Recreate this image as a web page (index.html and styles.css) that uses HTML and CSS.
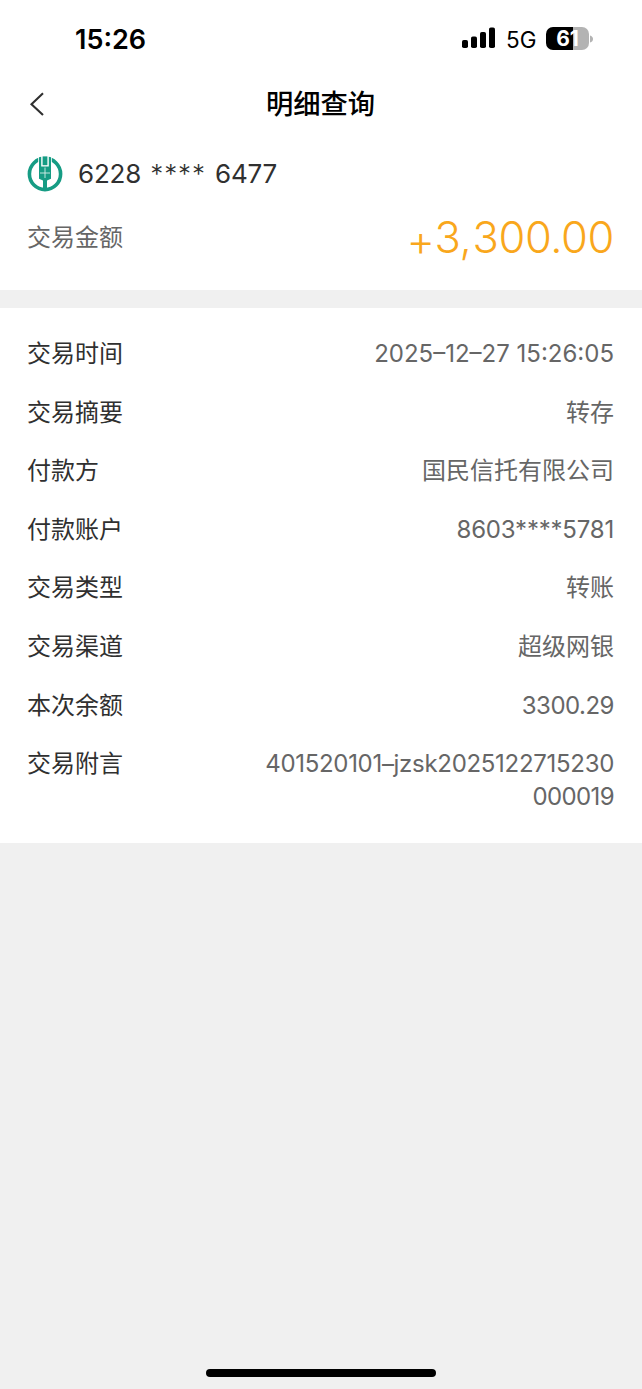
FILE: index.html
```html
<!DOCTYPE html>
<html lang="zh-CN">
<head>
<meta charset="utf-8">
<title>明细查询</title>
<link rel="stylesheet" href="styles.css">
</head>
<body>
<div class="screen">
  <div class="status">
    <span class="time">15:26</span>
    <div class="indicators">
      <svg class="signal" width="33" height="22" viewBox="0 0 33 22">
        <rect x="0" y="13" width="6" height="8" rx="1.8"/>
        <rect x="9" y="9.5" width="6" height="11.5" rx="1.8"/>
        <rect x="18" y="5" width="6" height="16" rx="1.8"/>
        <rect x="27" y="0.5" width="6" height="20.5" rx="1.8"/>
      </svg>
      <span class="network">5G</span>
      <div class="battery"><span class="level">61</span><svg class="cap" width="3" height="8" viewBox="0 0 3 8"><path d="M0 0.5Q3 1.5 3 4T0 7.5Z" fill="#b3b3b3"/></svg></div>
    </div>
  </div>
  <header class="nav">
    <svg class="back" width="16" height="26" viewBox="0 0 16 26"><path d="M14 2.3L2.5 13.2L14 24.1" fill="none" stroke="#303030" stroke-width="2.1"/></svg>
    <h1 class="title">明细查询</h1>
  </header>
  <section class="summary">
    <div class="account">
      <svg class="logo" width="36" height="36" viewBox="0 0 36 36">
        <circle cx="18" cy="18" r="15.6" fill="none" stroke="#169c84" stroke-width="3.6"/>
        <path d="M11.2 0H24.8V8H11.2Z" fill="#fff"/>
        <g fill="#169c84">
          <path d="M12 1.3L14.2 0.7V10.5H21.8V0.7L24 1.3V22.7L20 24.5V34H16V24.5L12 22.7Z"/>
          <rect x="15.6" y="0.4" width="4.8" height="8.8"/>
        </g>
        <path d="M18 11.5V22M13 17H23" stroke="#d5eee9" stroke-width="0.9"/>
      </svg>
      <span class="card">6228 <span class="mask">****</span> 6477</span>
    </div>
    <div class="amount-row">
      <span class="amount-label">交易金额</span>
      <span class="amount"><span class="sign">+</span>3<span class="comma">,</span>300.00</span>
    </div>
  </section>
  <dl class="details">
    <div class="row"><dt>交易时间</dt><dd class="date">2025–12–27 15:26:05</dd></div>
    <div class="row"><dt>交易摘要</dt><dd>转存</dd></div>
    <div class="row"><dt>付款方</dt><dd>国民信托有限公司</dd></div>
    <div class="row"><dt>付款账户</dt><dd class="payer">8603****5781</dd></div>
    <div class="row"><dt>交易类型</dt><dd>转账</dd></div>
    <div class="row"><dt>交易渠道</dt><dd>超级网银</dd></div>
    <div class="row"><dt>本次余额</dt><dd class="balance">3300.29</dd></div>
    <div class="row"><dt>交易附言</dt><dd class="memo">401520101–jzsk2025122715230<br><span class="tail">000019</span></dd></div>
  </dl>
  <div class="home-bar"></div>
</div>
</body>
</html>
```
FILE: styles.css
```css
* { box-sizing: border-box; }
body {
  margin: 0;
  background: #f0f0f0;
  font-family: Inter, "Noto Sans CJK SC", sans-serif;
  color: #303030;
}
.screen {
  display: flex;
  flex-direction: column;
  height: 1389px;
}
.status {
  display: flex;
  justify-content: space-between;
  align-items: center;
  height: 76px;
  padding: 2px 49px 0 75px;
  background: #fff;
  color: #000;
}
.time { padding-top: 2px; font-size: 27px; font-weight: 600; line-height: 32px; }
.indicators { display: flex; align-items: center; }
.signal { margin-bottom: 3px; }
.network { margin-left: 11px; padding-top: 2px; font-size: 22.5px; line-height: 28px; width: 40px; }
.battery { display: flex; align-items: center; margin-bottom: 1px; }
.level {
  width: 43px;
  height: 23px;
  border-radius: 7px;
  background: linear-gradient(90deg, #000 62%, #b3b3b3 62%);
  color: #fff;
  font-size: 21px;
  font-weight: 700;
  line-height: 23px;
  text-align: center;
}
.cap { margin-left: 1px; }
.nav {
  display: grid;
  grid-template-columns: 60px 1fr 60px;
  align-items: center;
  height: 56px;
  background: #fff;
}
.back { margin-left: 29px; }
.title {
  margin: 0;
  padding: 2px 1px 0 0;
  color: #000;
  font-size: 27.3px;
  font-weight: 500;
  line-height: 40px;
  text-align: center;
}
.summary { height: 158px; padding: 24px 28px 0 27px; background: #fff; }
.account { display: flex; align-items: center; height: 36px; gap: 15px; }
.card {
  padding-bottom: 2px;
  font-size: 26px;
  letter-spacing: -0.2px;
  word-spacing: 2px;
  white-space: nowrap;
}
.mask { font-weight: 300; letter-spacing: 0.9px; }
.amount-row {
  display: flex;
  justify-content: space-between;
  align-items: center;
  height: 60px;
  margin-top: 15px;
}
.amount-label { padding-bottom: 4px; font-size: 24px; color: #666; }
.amount {
  font-size: 43.5px;
  font-weight: 300;
  letter-spacing: -0.4px;
  color: #f9a71c;
}
.sign { display: inline-block; transform: translateY(3px); }
.comma { margin-right: 1px; }
.details {
  display: flex;
  flex-direction: column;
  gap: 25.6px;
  height: 535.5px;
  margin: 17.5px 0 0;
  padding: 29.5px 28px 0 27px;
  background: #fff;
}
.row {
  display: flex;
  justify-content: space-between;
  font-size: 24px;
  line-height: 33px;
}
dd { margin: 0; color: #666; text-align: right; white-space: nowrap; }
.date { letter-spacing: 0; }
.payer { letter-spacing: -0.2px; }
.balance { letter-spacing: -0.5px; }
.memo { letter-spacing: -0.3px; }
.tail { letter-spacing: -0.6px; }
.home-bar {
  width: 230px;
  height: 8px;
  margin: auto auto 12px;
  border-radius: 4px;
  background: #000;
}
```
